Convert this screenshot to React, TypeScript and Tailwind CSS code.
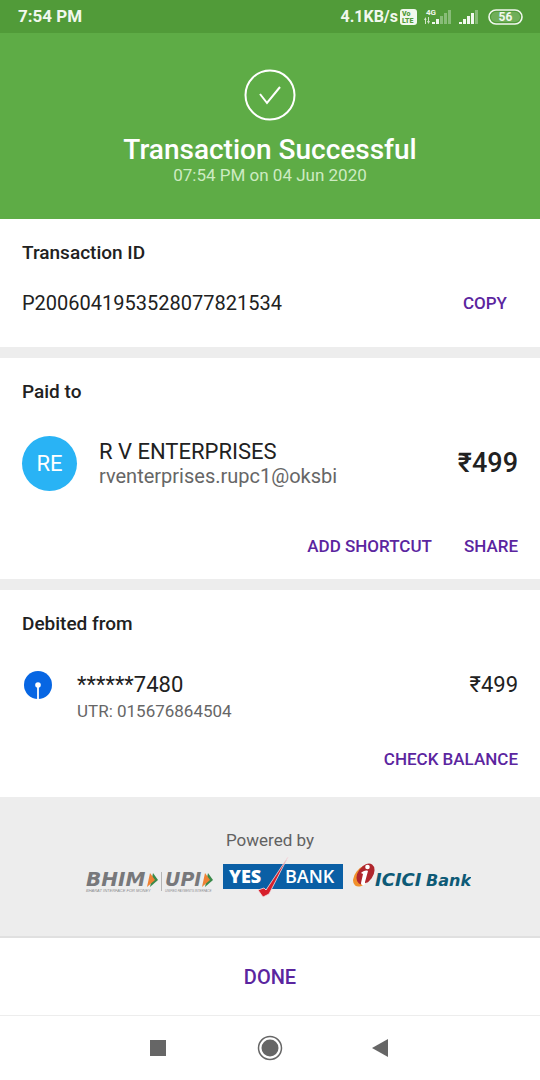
import React from 'react';

const StatusBar: React.FC = () => (
  <div className="flex h-[33px] items-center justify-between bg-[#519b39] pl-[18px] pr-[17px] text-[#f1f8ee]">
    <span className="text-[17px] font-bold">7:54 PM</span>
    <div className="flex items-center">
      <span className="text-[16px] font-bold">4.1KB/s</span>
      <svg className="ml-[2px] h-[16px] w-[17px]" viewBox="0 0 17 16">
        <rect width="17" height="16" rx="3" fill="#f1f8ee" />
        <text x="2" y="7" fontSize="7" fontWeight="900" fill="#519b39">Vo</text>
        <text x="2" y="14" fontSize="7" fontWeight="900" fill="#519b39">LTE</text>
      </svg>
      <svg className="ml-[7px] h-[18px] w-[28px]" viewBox="0 0 28 18" fill="#f1f8ee">
        <text x="2" y="7" fontSize="8" fontWeight="700">4G</text>
        <path d="M1 10h1v6h-1zM0 12l1.500-3 1 3zM4 9h1v6h-1zM3 13h3l-1.500 3z" opacity=".8" />
        <path d="M8 14h3v2h-3zM12 11h3v5h-3z" />
        <path d="M16 8h3v8h-3zM20 5h3v11h-3zM24 2h3v14h-3z" opacity=".35" />
      </svg>
      <svg className="ml-[7px] h-[18px] w-[22px]" viewBox="0 0 22 18" fill="#f1f8ee">
        <path d="M0 14h3v2h-3zM4 11h3v5h-3zM8 8h3v8h-3zM12 5h3v11h-3z" />
        <path d="M16 2h3v14h-3z" opacity=".35" />
      </svg>
      <svg className="ml-[7px] h-[16px] w-[35px]" viewBox="0 0 35 16">
        <rect x="1" y="1" width="33" height="14" rx="7" fill="none" stroke="#f1f8ee" strokeWidth="1.600" />
        <path d="M8 3h19a5 5 0 0 1 0 10H8a5 5 0 0 1 0-10z" fill="#6fae59" />
        <text x="17.500" y="12" fontSize="12" fontWeight="700" textAnchor="middle" fill="#f1f8ee">56</text>
      </svg>
    </div>
  </div>
);

const TextButton: React.FC<{ label: string }> = ({ label }) => (
  <button className="text-[17px] leading-6 font-medium text-[#5b259f]">{label}</button>
);

const BhimUpiLogo: React.FC = () => (
  <svg className="h-[42px] w-[128px]" viewBox="0 0 128 42" role="img" aria-label="BHIM UPI">
    <g fill="#77787b" fontFamily="DejaVu Sans" fontWeight="700" fontStyle="oblique">
      <text x="1" y="30" fontSize="20">BHIM</text>
      <text x="80" y="30" fontSize="19">UPI</text>
    </g>
    <g fill="#8b8c8e" fontFamily="Liberation Sans" fontStyle="italic">
      <text x="1" y="36" fontSize="4">BHARAT INTERFACE FOR MONEY</text>
      <text x="80" y="36" fontSize="3">UNIFIED PAYMENTS INTERFACE</text>
    </g>
    <path d="M76.500 16v19" stroke="#b5b5b5" strokeWidth="1" />
    <path d="M68 17l5 7-8 7z" fill="#3a8a4a" />
    <path d="M65 17l5 7-8 7z" fill="#ee8133" />
    <path d="M123 17l5 7-8 7z" fill="#3a8a4a" />
    <path d="M120 17l5 7-8 7z" fill="#ee8133" />
  </svg>
);

const YesBankLogo: React.FC = () => (
  <svg className="h-[42px] w-[120px]" viewBox="0 0 120 42" role="img" aria-label="YES BANK">
    <rect y="8" width="120" height="25" fill="#0a5fa5" />
    <g fill="#fff" fontFamily="Open Sans">
      <text x="6" y="27" fontSize="18" fontWeight="800">YES</text>
      <text x="62" y="27" fontSize="18" fontWeight="600">BANK</text>
    </g>
    <path d="M35 34l6-2 2 2L65 1 46 38l-6 3z" fill="#d71f2b" stroke="#f3dfe3" strokeWidth=".8" />
  </svg>
);

const IciciLogo: React.FC = () => (
  <svg className="h-[42px] w-[118px]" viewBox="0 0 118 42" role="img" aria-label="ICICI Bank">
    <ellipse cx="9.500" cy="20" rx="7.500" ry="12" transform="rotate(38 9.500 20)" fill="#f1902b" />
    <ellipse cx="12.500" cy="18" rx="7.500" ry="11.500" transform="rotate(35 12.500 18)" fill="#b0262d" />
    <circle cx="14.500" cy="11" r="2.300" fill="#fff" />
    <path d="M8 17c2-2 5-3 7-2l-3 11c0 2 1 1 2 0-1 3-6 5-6 1l2-9z" fill="#fff" />
    <g fill="#0e5a76" fontFamily="DejaVu Sans" fontWeight="700" fontStyle="oblique">
      <text x="22" y="30" fontSize="18">ICICI</text>
      <text x="73" y="30" fontSize="16">Bank</text>
    </g>
  </svg>
);

const App: React.FC = () => {
  return (
    <div className="flex min-h-screen flex-col bg-white font-['Roboto',sans-serif] text-[#212121]">
      <StatusBar />

      <header className="flex h-[186px] flex-col items-center bg-[#5eac46] pt-9 text-white">
        <svg className="h-[52px] w-[52px]" viewBox="0 0 52 52" fill="none" stroke="#fff" strokeWidth="2">
          <circle cx="26" cy="26" r="24.500" />
          <path d="M16 25l7 9L36 18" />
        </svg>
        <h1 className="mt-3.5 text-[28px] leading-[30px] font-medium">Transaction Successful</h1>
        <p className="text-[17px] leading-5 text-[#cdebc2]">07:54 PM on 04 Jun 2020</p>
      </header>

      <main className="divide-y-[11px] divide-[#ededed]">
        <section className="px-[22px] pt-[22px] pb-8">
          <h2 className="text-[19px] leading-6 font-medium">Transaction ID</h2>
          <div className="mt-[26px] flex items-center justify-between pr-[11px]">
            <span className="text-[20px] leading-6">P2006041953528077821534</span>
            <TextButton label="COPY" />
          </div>
        </section>

        <section className="px-[22px] pt-[22px] pb-[21px]">
          <h2 className="text-[19px] leading-6 font-medium">Paid to</h2>
          <div className="mt-8 flex items-center">
            <div className="flex h-[55px] w-[55px] items-center justify-center rounded-full bg-[#29b3f5] text-[22px] text-white">RE</div>
            <div className="ml-[22px] flex-1">
              <p className="text-[22px] leading-6">R V ENTERPRISES</p>
              <p className="text-[20px] leading-6 text-[#666]">rventerprises.rupc1@oksbi</p>
            </div>
            <span className="text-[27px] font-medium">₹499</span>
          </div>
          <div className="mt-[43px] flex justify-end gap-8">
            <TextButton label="ADD SHORTCUT" />
            <TextButton label="SHARE" />
          </div>
        </section>

        <section className="px-[22px] pt-[22px] pb-[26px]">
          <h2 className="text-[19px] leading-6 font-medium">Debited from</h2>
          <div className="mt-[35px] flex items-start">
            <svg className="ml-[2px] h-7 w-7" viewBox="0 0 28 28">
              <circle cx="14" cy="14" r="14" fill="#0766e3" />
              <circle cx="14" cy="14" r="2.800" fill="#fff" />
              <path d="M14 14v14" stroke="#fff" strokeWidth="1.800" />
            </svg>
            <div className="ml-[25px] flex-1">
              <p className="text-[22px] leading-7">******7480</p>
              <p className="text-[17px] leading-6 text-[#666]">UTR: 015676864504</p>
            </div>
            <span className="text-[22px] leading-7">₹499</span>
          </div>
          <div className="mt-6 flex justify-end">
            <TextButton label="CHECK BALANCE" />
          </div>
        </section>
      </main>

      <footer className="h-[141px] border-b-2 border-[#e0e0e0] bg-[#ededed] pt-[31px]">
        <p className="text-center text-[17px] leading-6 text-[#616161]">Powered by</p>
        <div className="mt-1 flex justify-center gap-2.5 pl-4">
          <BhimUpiLogo />
          <YesBankLogo />
          <IciciLogo />
        </div>
      </footer>

      <button className="h-[77px] w-full text-[20px] font-medium text-[#5b259f]">DONE</button>

      <nav className="flex h-[65px] items-center justify-center gap-[83px] border-t border-[#ededed]">
        <button aria-label="Recent apps">
          <svg className="h-7 w-7" viewBox="0 0 28 28" fill="#666">
            <rect x="5" y="6" width="16" height="16" />
          </svg>
        </button>
        <button aria-label="Home">
          <svg className="h-7 w-7" viewBox="0 0 28 28" fill="#666">
            <circle cx="14" cy="14" r="11.500" fill="none" stroke="#666" strokeWidth="1.500" />
            <circle cx="14" cy="14" r="8.500" />
          </svg>
        </button>
        <button aria-label="Back">
          <svg className="h-7 w-7" viewBox="0 0 28 28" fill="#666">
            <path d="M5 14l16-9v18z" />
          </svg>
        </button>
      </nav>
    </div>
  );
};

export default App;
